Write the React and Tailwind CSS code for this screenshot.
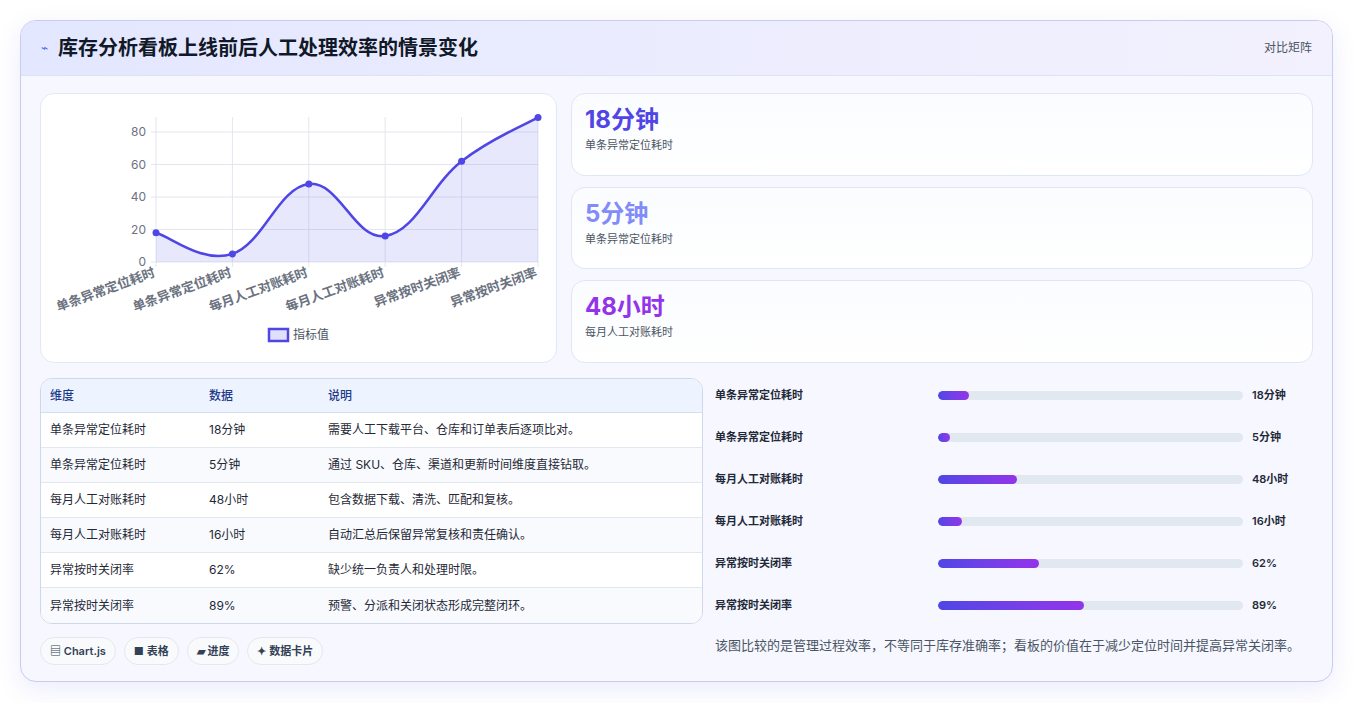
import React from "react";

const pts = [18, 5, 48, 16, 62, 89];
const labels = ["单条异常定位耗时","单条异常定位耗时","每月人工对账耗时","每月人工对账耗时","异常按时关闭率","异常按时关闭率"];
const X0 = 115, X1 = 497, Y0 = 168, K = 1.625;
const P = pts.map((v, i) => [X0 + (i * (X1 - X0)) / 5, Y0 - v * K]);
function curve() {
  let d = `M${P[0][0]},${P[0][1]}`;
  const t = 0.2;
  for (let i = 0; i < P.length - 1; i++) {
    const p0 = P[i - 1] || P[i], p1 = P[i], p2 = P[i + 1], p3 = P[i + 2] || p2;
    const c1 = [p1[0] + (p2[0] - p0[0]) * t, p1[1] + (p2[1] - p0[1]) * t];
    const c2 = [p2[0] - (p3[0] - p1[0]) * t, p2[1] - (p3[1] - p1[1]) * t];
    d += ` C${c1[0]},${c1[1]} ${c2[0]},${c2[1]} ${p2[0]},${p2[1]}`;
  }
  return d;
}
const line = curve();
const area = line + ` L${X1},${Y0} L${X0},${Y0} Z`;

const rows = [
  ["单条异常定位耗时", "18分钟", "需要人工下载平台、仓库和订单表后逐项比对。"],
  ["单条异常定位耗时", "5分钟", "通过 SKU、仓库、渠道和更新时间维度直接钻取。"],
  ["每月人工对账耗时", "48小时", "包含数据下载、清洗、匹配和复核。"],
  ["每月人工对账耗时", "16小时", "自动汇总后保留异常复核和责任确认。"],
  ["异常按时关闭率", "62%", "缺少统一负责人和处理时限。"],
  ["异常按时关闭率", "89%", "预警、分派和关闭状态形成完整闭环。"],
];
const bars = [10, 4, 26, 8, 33, 48];

export default function App() {
  return (
    <div className="w-[1354px] h-[703px] bg-white p-[20px] pr-[21px]" style={{ fontFamily: 'Inter, "Noto Sans CJK SC", sans-serif' }}>
      <div className="h-[662px] rounded-[16px] border border-[#c7cdf0] bg-[#f6f7ff] overflow-hidden shadow-[0_8px_24px_rgba(99,102,241,0.12)] flex flex-col">
        <div className="h-[55px] shrink-0 flex items-center justify-between px-[20px] bg-gradient-to-r from-[#e3e7ff] to-[#f3f1fd] border-b border-[#dde3f5]">
          <div className="flex items-center gap-[10px]">
            <span className="text-[#4f6ee8] text-[12px]">⌁</span>
            <span className="text-[20px] font-bold text-[#111827]">库存分析看板上线前后人工处理效率的情景变化</span>
          </div>
          <span className="text-[12px] text-[#4b5563]">对比矩阵</span>
        </div>
        <div className="flex-1 px-[19px] pt-[17px]">
          <div className="flex gap-[14px] h-[270px]">
            <div className="w-[517px] h-[270px] rounded-[14px] border border-[#e2e8f3] bg-white">
              <svg width="517" height="270" style={{ fontFamily: 'Inter, "Noto Sans CJK SC", sans-serif' }}>
                {[0, 20, 40, 60, 80].map((v) => (
                  <g key={v}>
                    <line x1={X0 - 5} x2={X1} y1={Y0 - v * K} y2={Y0 - v * K} stroke="#e3e6ee" />
                    <text x={X0 - 10} y={Y0 - v * K + 4} textAnchor="end" fontSize="12" fill="#6b7280">{v}</text>
                  </g>
                ))}
                {P.map(([x], i) => (
                  <line key={i} x1={x} x2={x} y1={23} y2={Y0 + 5} stroke="#e3e6ee" />
                ))}
                <path d={area} fill="#6366f1" fillOpacity="0.15" />
                <path d={line} fill="none" stroke="#4f46e5" strokeWidth="2.5" />
                {P.map(([x, y], i) => (
                  <circle key={i} cx={x} cy={y} r="3.5" fill="#4f46e5" />
                ))}
                {P.map(([x], i) => (
                  <text key={i} x={x} y={Y0 + 14} textAnchor="end" fontSize="13" fontWeight="600" fill="#6b7280" transform={`rotate(-20 ${x} ${Y0 + 14})`}>{labels[i]}</text>
                ))}
                <rect x="228" y="235" width="19" height="12" fill="#e0e0fb" stroke="#4f46e5" strokeWidth="2.5" />
                <text x="252" y="245" fontSize="12" fill="#4b5563">指标值</text>
              </svg>
            </div>
            <div className="flex-1 flex flex-col gap-[11px]">
              {[["18分钟", "text-[#4f46e5]", "单条异常定位耗时"], ["5分钟", "text-[#818cf8]", "单条异常定位耗时"], ["48小时", "text-[#9333ea]", "每月人工对账耗时"]].map(([v, c, l], i) => (
                <div key={i} className="h-[83px] rounded-[14px] border border-[#dfe6f4] bg-gradient-to-b from-[#fafcff] to-white px-[13px] pt-[10px]">
                  <div className={`text-[24px] font-bold leading-[32px] ${c}`}>{v}</div>
                  <div className="text-[11px] text-[#4b5563] mt-[1px]">{l}</div>
                </div>
              ))}
            </div>
          </div>
          <div className="flex gap-[12px] mt-[15px]">
            <div className="w-[663px]">
              <div className="rounded-[12px] border border-[#cfd8ea] bg-white overflow-hidden">
                <div className="h-[34px] flex items-center bg-[#eef4ff] border-b border-[#d5dff0] text-[12px] text-[#1e3a8a] font-medium">
                  <div className="w-[168px] pl-[9px]">维度</div>
                  <div className="w-[119px]">数据</div>
                  <div>说明</div>
                </div>
                {rows.map((r, i) => (
                  <div key={i} className={`h-[35px] flex items-center text-[12px] text-[#1f2937] ${i < 5 ? "border-b border-[#e3e8f0]" : ""} ${i % 2 ? "bg-[#f8fafd]" : "bg-white"}`}>
                    <div className="w-[168px] pl-[9px]">{r[0]}</div>
                    <div className="w-[119px]">{r[1]}</div>
                    <div>{r[2]}</div>
                  </div>
                ))}
              </div>
              <div className="flex gap-[8px] mt-[13px]">
                {["▤ Chart.js", "■ 表格", "▰ 进度", "✦ 数据卡片"].map((c) => (
                  <span key={c} className="h-[28px] px-[9px] flex items-center rounded-full border border-[#e2e8f0] bg-[#f8fafc] text-[11px] font-semibold text-[#334155]">{c}</span>
                ))}
              </div>
            </div>
            <div className="flex-1 -mt-[4px]">
              {bars.map((b, i) => (
                <div key={i} className="h-[42px] flex items-center text-[11px] font-semibold text-[#1f2937]">
                  <div className="w-[223px]">{rows[i][0]}</div>
                  <div className="w-[305px] h-[9px] rounded-full bg-[#e2e8f0] overflow-hidden">
                    <div className="h-full rounded-full bg-gradient-to-r from-[#4f46e5] to-[#9333ea]" style={{ width: `${b}%` }} />
                  </div>
                  <div className="ml-[9px]">{rows[i][1]}</div>
                </div>
              ))}
              <div className="mt-[10px] text-[13px] text-[#4b5563]">该图比较的是管理过程效率，不等同于库存准确率；看板的价值在于减少定位时间并提高异常关闭率。</div>
            </div>
          </div>
        </div>
      </div>
    </div>
  );
}
